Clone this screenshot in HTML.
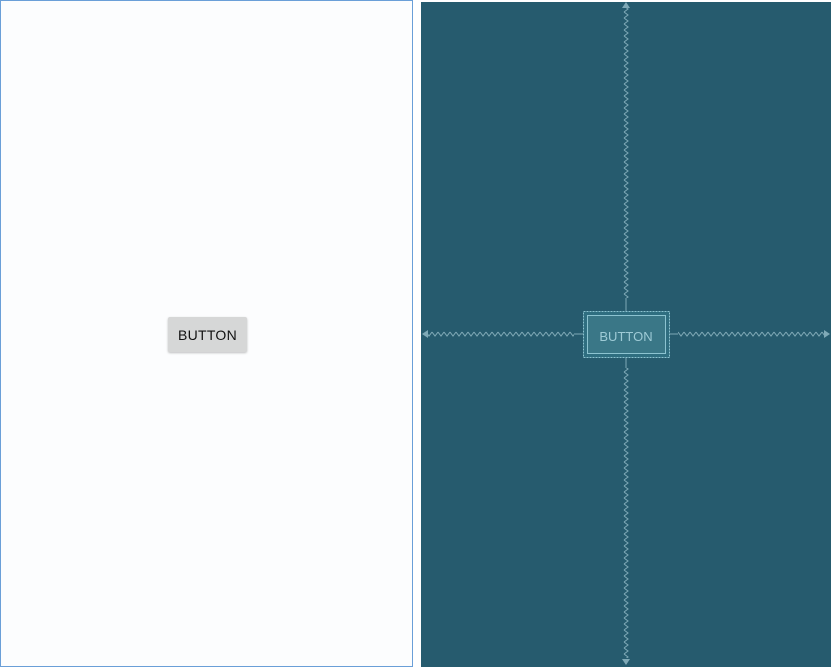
<!DOCTYPE html>
<html><head><meta charset="utf-8"><style>
html,body{margin:0;padding:0;width:831px;height:667px;overflow:hidden;background:#fff;font-family:"Liberation Sans",sans-serif}
#l{position:absolute;left:0;top:0;width:411px;height:665px;border:1px solid #6a9fd8;background:#fcfdfe}
#b{position:absolute;left:167px;top:316px;width:79px;height:35px;background:#d6d7d7;box-shadow:0 1px 2px rgba(0,0,0,.25);border-radius:2px;font-size:14px;color:#111;text-align:center;line-height:36px;letter-spacing:.3px}
#r{position:absolute;left:421px;top:2px;width:410px;height:665px;background:#265b6e}
svg{position:absolute;left:0;top:0}
</style></head><body>
<div id="l"><div id="b">BUTTON</div></div>
<div id="r"></div>
<svg width="831" height="667">
<defs>
<pattern id="zv" x="623" y="0" width="6" height="6" patternUnits="userSpaceOnUse"><path d="M1 0 L5 3 L1 6" fill="none" stroke="#7fa9b6" stroke-width="1"/></pattern>
<pattern id="zh" x="0" y="331" width="6" height="6" patternUnits="userSpaceOnUse"><path d="M0 1 L3 5 L6 1" fill="none" stroke="#7fa9b6" stroke-width="1"/></pattern>
</defs>
<rect x="623" y="8" width="6" height="290" fill="url(#zv)"/>
<rect x="623" y="368" width="6" height="290" fill="url(#zv)"/>
<rect x="428" y="331" width="146" height="6" fill="url(#zh)"/>
<rect x="678" y="331" width="146" height="6" fill="url(#zh)"/>
<path d="M626 298V311M626 358V368M574 334H583M670 334H678" stroke="#7fa9b6"/>
<path d="M622 8L626 2L630 8Z M622 659L626 665L630 659Z M428 330L422 334L428 338Z M824 330L830 334L824 338Z" fill="#7fa9b6"/>
<rect x="583.5" y="311.5" width="86" height="46" fill="#2f6e80" stroke="#8cc3d0" stroke-dasharray="2 1"/>
<rect x="587.5" y="315.5" width="78" height="38" fill="#3a7787" stroke="#8cc3d0"/>
<text x="626" y="341" font-size="13" fill="#9ecbd6" text-anchor="middle" font-family="Liberation Sans">BUTTON</text>
</svg>
</body></html>
